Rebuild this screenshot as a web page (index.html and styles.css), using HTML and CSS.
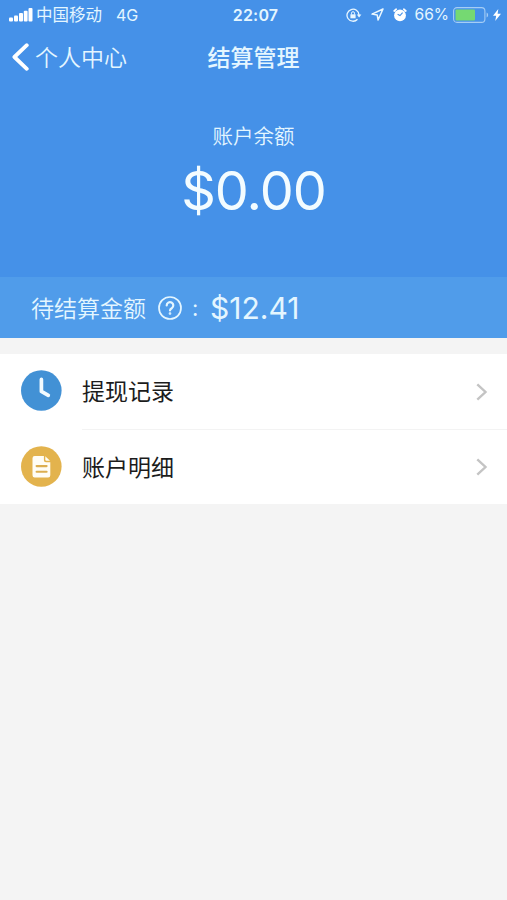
FILE: index.html
```html
<!DOCTYPE html>
<html lang="zh-CN">
<head>
  <meta charset="UTF-8">
  <meta name="viewport" content="width=device-width, initial-scale=1.0">
  <title>结算管理</title>
  <link rel="stylesheet" href="styles.css">
</head>
<body>
  <div class="header">
    <!-- Status bar -->
    <div class="status-bar">
      <div class="status-left">
        <svg class="signal" width="24" height="14" viewBox="0 0 24 14" fill="#fff">
          <rect x="0" y="9.5" width="4" height="4" rx="1"/>
          <rect x="5" y="7.5" width="4" height="6" rx="1"/>
          <rect x="10" y="5" width="4" height="8.5" rx="1"/>
          <rect x="14.8" y="2.7" width="3.8" height="10.8" rx="1"/>
          <rect x="19.5" y="0" width="4" height="13.5" rx="1"/>
        </svg>
        <span class="carrier">中国移动</span>
        <span class="network">4G</span>
      </div>
      <span class="time">22:07</span>
      <div class="status-right">
        <svg class="lock" width="16" height="14" viewBox="0 0 16 14" fill="none" stroke="#e9f7ff" stroke-width="1.3">
          <path d="M11.5 11.2A6 6 0 1 1 13 7"/>
          <path d="M10.8 6.6h4.6l-2.3 3z" fill="#e9f7ff" stroke="none"/>
          <rect x="4.4" y="6.3" width="5.2" height="4" fill="#e9f7ff" stroke="none"/>
          <path d="M5.5 6.5V5.2a1.5 1.5 0 0 1 3 0v1.3" stroke-width="1"/>
        </svg>
        <svg class="location" width="13" height="13" viewBox="0 0 13 13" fill="none" stroke="#e9f7ff" stroke-width="1.5" stroke-linejoin="round">
          <path d="M12 1L1 6.1l5.2.8.9 5.1z"/>
        </svg>
        <svg class="alarm" width="14" height="14" viewBox="0 0 14 14">
          <circle cx="7" cy="7.4" r="5.9" fill="#fff"/>
          <path d="M1.2 3L3.2 1.2M12.8 3l-2-1.8" stroke="#fff" stroke-width="1.7" stroke-linecap="round"/>
          <path d="M9.6 4.6L7 7.6 4.6 6.2" fill="none" stroke="#4591e8" stroke-width="1.1"/>
        </svg>
        <span class="percent">66%</span>
        <svg class="battery" width="36" height="16" viewBox="0 0 36 16">
          <rect x=".6" y=".6" width="31.3" height="14.8" rx="3.4" fill="none" stroke="#a5cdf5" stroke-width="1.1"/>
          <rect x="2.5" y="2.5" width="19.5" height="11" rx="1" fill="#75d972"/>
          <path d="M33.6 5.5c2 .8 2 4.2 0 5z" fill="#a5cdf5"/>
        </svg>
        <svg class="bolt" width="8" height="12" viewBox="0 0 8 12" fill="#fff">
          <path d="M5.3 0L0 6.8h3.2L2.2 12 8 4.8H4.6z"/>
        </svg>
      </div>
    </div>

    <!-- Navigation -->
    <div class="nav">
      <a class="back" href="#">
        <svg width="18" height="28" viewBox="0 0 18 28" fill="none" stroke="#fff" stroke-width="3.8" stroke-linecap="round" stroke-linejoin="round">
          <path d="M15.8 2.2L3.4 14l12.4 11.8"/>
        </svg>
        <span class="back-text">个人中心</span>
      </a>
      <h1 class="title">结算管理</h1>
    </div>

    <!-- Account balance -->
    <div class="balance">
      <p class="balance-label">账户余额</p>
      <p class="balance-amount">$0.00</p>
    </div>

    <div class="pending">
      <span class="pending-label">待结算金额</span>
      <svg class="help" width="24" height="24" viewBox="0 0 24 24" fill="none" stroke="#e4f6ff" stroke-linecap="round" stroke-linejoin="round">
        <circle cx="12" cy="12" r="11" stroke-width="1.7"/>
        <path d="M8.7 9.4a3.3 3.3 0 1 1 5.2 2.7c-1.2.8-1.9 1.2-1.9 2.3" stroke-width="2.2"/>
        <circle cx="12" cy="17.5" r=".5" stroke-width="1.7"/>
      </svg>
      <span class="colon">:</span>
      <span class="pending-amount">$12.41</span>
    </div>
  </div>

  <!-- Menu -->
  <div class="menu">
    <a class="menu-item" href="#">
      <svg class="menu-icon" width="41" height="41" viewBox="0 0 41 41">
        <circle cx="20.3" cy="20.5" r="20.3" fill="#4291d5"/>
        <path d="M20.4 9.4V21.4L27.3 25.4" fill="none" stroke="#f2fbff" stroke-width="3.7" stroke-linecap="round" stroke-linejoin="round"/>
      </svg>
      <div class="menu-body">
        <span class="menu-text">提现记录</span>
        <svg class="arrow" width="12" height="18" viewBox="0 0 12 18" fill="none" stroke="#c4c4c4" stroke-width="2.4">
          <path d="M1.3 1.3L9.5 9l-8.2 7.7"/>
        </svg>
      </div>
    </a>
    <a class="menu-item" href="#">
      <svg class="menu-icon" width="41" height="41" viewBox="0 0 41 41">
        <circle cx="20.3" cy="20.5" r="20.3" fill="#e3b34d"/>
        <path d="M13.7 10h9.2v4.2q0 2 2 2h4.4v13.1q0 2.2-2.2 2.2H13.7q-2.2 0-2.2-2.2V12.2q0-2.2 2.2-2.2z" fill="#fffdf5"/>
        <path d="M24.3 10.2l4.7 4.6h-3.5q-1.2 0-1.2-1.2z" fill="#fffdf5"/>
        <path d="M15.6 20.1h10M15.6 25.7h10" stroke="#dcae50" stroke-width="2.1" stroke-linecap="round"/>
      </svg>
      <div class="menu-body">
        <span class="menu-text">账户明细</span>
        <svg class="arrow" width="12" height="18" viewBox="0 0 12 18" fill="none" stroke="#c4c4c4" stroke-width="2.4">
          <path d="M1.3 1.3L9.5 9l-8.2 7.7"/>
        </svg>
      </div>
    </a>
  </div>
</body>
</html>
```
FILE: styles.css
```css
* {
  box-sizing: border-box;
}
body {
  margin: 0;
  min-height: 100vh;
  background-color: #f4f4f4;
  font-family: Inter, "Noto Sans CJK SC", sans-serif;
  color: #1c1c1c;
}
svg {
  display: block;
  flex-shrink: 0;
}
a {
  color: inherit;
  text-decoration: none;
}
.header {
  background-color: #4591e8;
  color: #e4f6ff;
}

/* Status bar */
.status-bar {
  display: grid;
  grid-template-columns: 1fr auto 1fr;
  align-items: center;
  height: 29px;
  padding: 0 6px 0 9px;
  font-size: 16px;
  line-height: 24px;
}
.status-left,
.status-right {
  display: flex;
  align-items: center;
}
.status-right {
  justify-content: flex-end;
}
.carrier {
  margin-left: 3px;
  padding-top: 1px;
  font-size: 16.5px;
}
.network {
  margin-left: 14px;
}
.time {
  padding-left: 1px;
  font-weight: 600;
  letter-spacing: 0.2px;
}
.location {
  margin-left: 9px;
}
.alarm {
  margin-left: 9px;
}
.percent {
  margin-left: 8px;
  font-size: 15.5px;
}
.battery {
  margin-left: 4px;
}
.bolt {
  margin-left: 4px;
}

/* Navigation */
.nav {
  display: grid;
  grid-template-columns: 1fr auto 1fr;
  align-items: center;
  height: 56px;
  padding: 0 12px 0 11px;
}
.back {
  display: flex;
  align-items: center;
  gap: 6px;
  font-size: 23px;
  font-weight: 350;
}
.back-text {
  padding-bottom: 2px;
}
.title {
  margin: 0;
  padding: 0 0 2px 1px;
  font-size: 23px;
  font-weight: 500;
}

/* Balance */
.balance {
  height: 192px;
  padding-top: 37px;
  text-align: center;
}
.balance-label {
  margin: 0;
  font-size: 20.5px;
  font-weight: 350;
  line-height: 30px;
}
.balance-amount {
  margin: 4px 0 0;
  font-size: 54px;
  line-height: 70px;
  letter-spacing: -1px;
  color: #f3fcff;
}
.pending {
  display: flex;
  align-items: center;
  height: 61px;
  padding-left: 31px;
  background-color: #509cea;
}
.pending-label {
  padding-bottom: 2px;
  font-size: 23px;
  font-weight: 350;
}
.help {
  margin-left: 12px;
}
.colon {
  width: 28px;
  padding-left: 10px;
  font-size: 22px;
}
.pending-amount {
  font-size: 30px;
}

/* Menu */
.menu {
  margin-top: 16px;
  background-color: #fff;
}
.menu-item {
  display: flex;
  align-items: center;
  height: 75px;
  padding-left: 21px;
}
.menu-icon {
  margin-bottom: 2px;
}
.menu-item + .menu-item .menu-icon {
  margin-bottom: 0;
}
.menu-body {
  display: flex;
  flex: 1;
  align-items: center;
  justify-content: space-between;
  height: 100%;
  margin-left: 20px;
  padding-right: 19px;
  font-size: 23px;
}
.menu-text {
  padding-bottom: 3px;
}
.menu-item + .menu-item .menu-body {
  border-top: 1px solid #f3f3f3;
}
```
